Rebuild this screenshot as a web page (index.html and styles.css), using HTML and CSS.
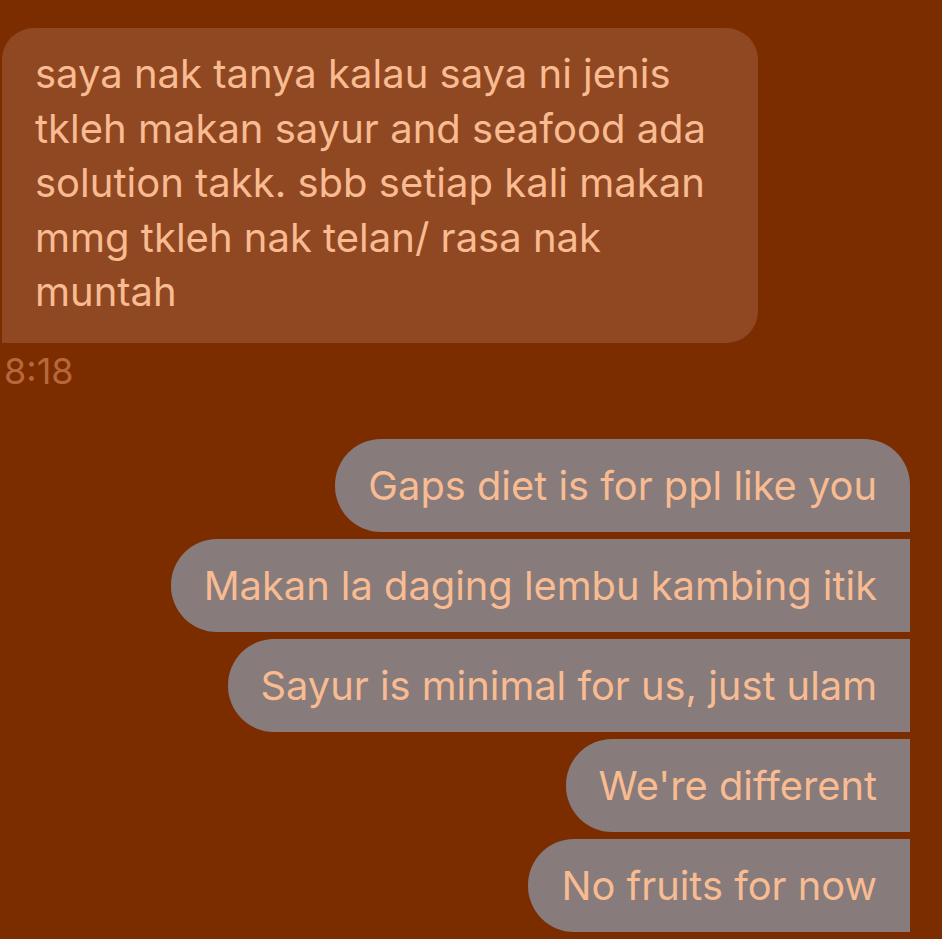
FILE: index.html
```html
<!DOCTYPE html>
<html>
<head>
<meta charset="utf-8">
<link rel="stylesheet" href="styles.css">
</head>
<body>
<div class="chat">
  <div class="incoming">
    <div class="bubble-in">saya nak tanya kalau saya ni jenis tkleh makan sayur and seafood ada solution takk. sbb setiap kali makan mmg tkleh nak telan/ rasa nak muntah</div>
    <div class="time">8:18</div>
  </div>
  <div class="outgoing">
    <div class="bubble-out first">Gaps diet is for ppl like you</div>
    <div class="bubble-out">Makan la daging lembu kambing itik</div>
    <div class="bubble-out">Sayur is minimal for us, just ulam</div>
    <div class="bubble-out">We're different</div>
    <div class="bubble-out last">No fruits for now</div>
  </div>
</div>
</body>
</html>
```
FILE: styles.css
```css
html, body {
  margin: 0;
  padding: 0;
  background: #7b2d00;
}
body {
  font-family: Inter, "Open Sans", sans-serif;
  color: #f8bb92;
}
.chat {
  padding: 28px 32px 0 2px;
  display: flex;
  flex-direction: column;
}
.incoming {
  display: flex;
  flex-direction: column;
  align-items: flex-start;
}
.bubble-in {
  width: 690px;
  background: #904822;
  border-radius: 32px 32px 32px 0;
  padding: 19px 33px 23px 33px;
  font-size: 40px;
  line-height: 54.5px;
}
.time {
  margin-top: 8px;
  margin-left: 2px;
  font-size: 36px;
  line-height: 40px;
  color: #b8673d;
}
.outgoing {
  margin-top: 48px;
  display: flex;
  flex-direction: column;
  align-items: flex-end;
  gap: 7px;
}
.bubble-out {
  background: #877b7b;
  height: 93px;
  box-sizing: border-box;
  padding: 0 33px;
  display: flex;
  align-items: center;
  font-size: 39.8px;
  border-radius: 46px 0 0 46px;
}
.bubble-out.first {
  border-radius: 46px 46px 0 46px;
}
```
